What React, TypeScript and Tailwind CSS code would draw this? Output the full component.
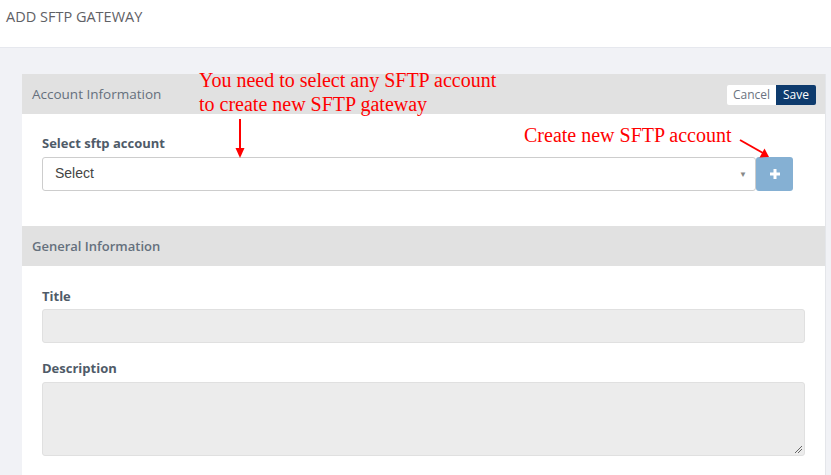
import React from "react";

export default function App() {
  const ui = { fontFamily: '"Open Sans", "Noto Sans", sans-serif' };
  const serif = { fontFamily: '"Liberation Serif", "DejaVu Serif", serif' };
  return (
    <div className="relative w-[831px] h-[475px] overflow-hidden bg-[#f1f2f6]" style={ui}>
      <div className="h-[48px] bg-white border-b border-[#e6e8ee] flex items-start pl-[6px] pt-[6px]">
        <span className="text-[14.5px] text-[#5f6166]">ADD SFTP GATEWAY</span>
      </div>
      <div className="pl-[22px] pr-[5px] pt-[26px]">
        <div className="bg-white border-r border-[#e4e6ea]">
          <div className="h-[40px] bg-[#e1e1e1] flex items-center justify-between pl-[10px] pr-[9px]">
            <span className="text-[13.5px] text-[#65707d]">Account Information</span>
            <div className="flex items-center mt-[2px]">
              <button className="w-[49px] h-[20px] bg-white text-[12px] text-[#6b7280] leading-none rounded-l-[2px]">Cancel</button>
              <button className="w-[40px] h-[20px] bg-[#0e3b6d] text-[12px] text-white leading-none rounded-r-[2px]">Save</button>
            </div>
          </div>
          <div className="pl-[20px] pr-[32px] pt-[20px] pb-[35px]">
            <div className="text-[13px] font-bold text-[#4f5b68] mb-[3px]">Select sftp account</div>
            <div className="flex">
              <div className="flex-1 h-[34px] border border-[#cdcdcd] rounded-[3px] flex items-center justify-between pl-[12px] pr-[8px]">
                <span className="text-[14px] text-[#444]" style={{ fontFamily: '"Liberation Sans", Arial, sans-serif' }}>Select</span>
                <span className="text-[8px] text-[#888]">▼</span>
              </div>
              <div className="w-[37px] h-[34px] bg-[#85b0d3] rounded-[3px] flex items-center justify-center">
                <svg width="12" height="12" viewBox="0 0 12 12">
                  <path d="M6 1v10M1 6h10" stroke="white" strokeWidth="3" />
                </svg>
              </div>
            </div>
          </div>
          <div className="h-[40px] bg-[#e1e1e1] flex items-center pl-[10px] pt-[2px]">
            <span className="text-[13px] font-semibold text-[#65707d]">General Information</span>
          </div>
          <div className="pl-[20px] pr-[20px] pt-[21px] pb-[20px]">
            <div className="text-[13px] font-bold text-[#4f5b68] mb-[3px]">Title</div>
            <div className="h-[34px] bg-[#ececec] border border-[#e0e0e0] rounded-[3px]"></div>
            <div className="text-[13px] font-bold text-[#4f5b68] mt-[16px] mb-[3px]">Description</div>
            <div className="relative h-[74px] bg-[#ececec] border border-[#e0e0e0] rounded-[3px]">
              <svg className="absolute right-[1px] bottom-[1px]" width="9" height="9" viewBox="0 0 9 9">
                <path d="M8 1L1 8M8 4L4 8" stroke="#666" strokeWidth="1" />
              </svg>
            </div>
          </div>
        </div>
      </div>

      {/* annotations */}
      <div className="absolute left-[199px] top-[68px] text-[20px] leading-[24px] text-[#ff0000]" style={serif}>
        <div>You need to select any SFTP account</div>
        <div>to create new SFTP gateway</div>
      </div>
      <svg className="absolute left-[234px] top-[119px]" width="12" height="40" viewBox="0 0 12 40">
        <path d="M6 0V30" stroke="#ff0000" strokeWidth="2" />
        <path d="M1.5 29L6 39L10.5 29Z" fill="#ff0000" />
      </svg>
      <div className="absolute left-[524px] top-[123px] text-[20px] leading-[24px] text-[#ff0000]" style={serif}>
        Create new SFTP account
      </div>
      <svg className="absolute left-[738px] top-[138px]" width="34" height="22" viewBox="0 0 34 22">
        <path d="M2 2L25 15" stroke="#ff0000" strokeWidth="2" />
        <path d="M21.5 19.5L31 19L26.5 10.5Z" fill="#ff0000" />
      </svg>
    </div>
  );
}
